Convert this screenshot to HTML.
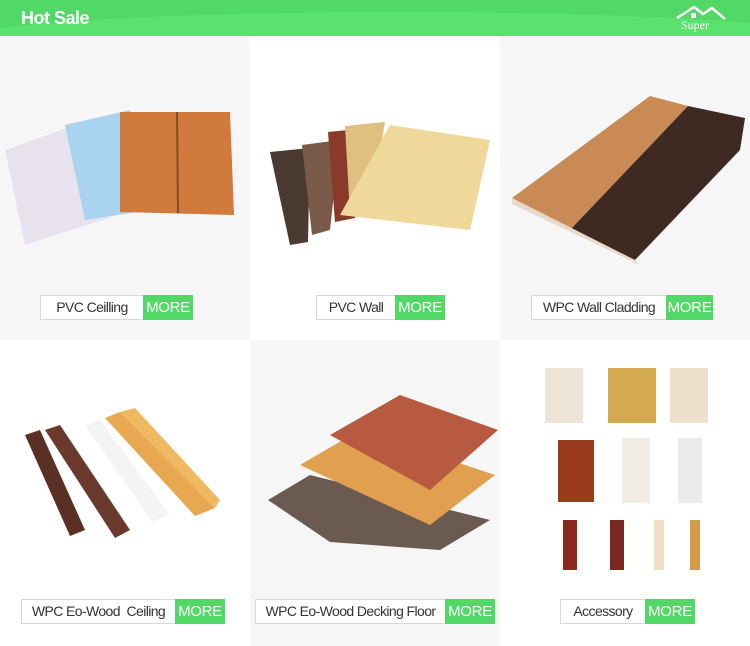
<!DOCTYPE html>
<html><head><style>
*{margin:0;padding:0;box-sizing:border-box}
body{width:750px;height:646px;overflow:hidden;font-family:"Liberation Sans",sans-serif;background:#fff;position:relative}
.hd{position:absolute;left:0;top:0;width:750px;height:36px;background:#52d866;overflow:hidden}
.hd .w{position:absolute;left:-50px;top:12px;width:900px;height:60px;border-radius:50%;background:#5ae26f}
.hd b{position:absolute;left:21px;top:8px;color:#fff;font-size:18px;letter-spacing:-0.5px}
.c{position:absolute;width:250px}
.g{background:#f6f6f6}
.lb{position:absolute;height:25px;border:1px solid #d8d8d8;background:#fff;font-size:14px;color:#333;line-height:23px;text-align:center;letter-spacing:-0.6px}
.g .lb{background:#f6f6f6}
.mo{position:absolute;height:25px;background:#52d866;color:#fff;font-size:15px;line-height:25px;text-align:center;letter-spacing:-0.3px}
svg{position:absolute}
</style></head><body>
<div class="hd"><div class="w"></div><b>Hot Sale</b>
<svg style="left:674px;top:4px" width="60" height="30"><path d="M3 14 L20 3 L29 10 L38 4 L51 15" stroke="#fff" stroke-width="2.5" fill="none"/><rect x="17" y="9" width="5" height="5" fill="#fff"/><text x="7" y="25" fill="#fff" font-size="12" font-family="Liberation Serif">Super</text></svg></div>

<div class="c g" style="left:0;top:36px;height:304px"></div>
<div class="c" style="left:250px;top:36px;height:304px"></div>
<div class="c g" style="left:500px;top:36px;height:304px"></div>
<div class="c" style="left:0;top:340px;height:306px"></div>
<div class="c g" style="left:250px;top:340px;height:306px"></div>
<div class="c" style="left:500px;top:340px;height:306px"></div>

<svg style="left:0;top:100px" width="250" height="150">
<polygon points="5,50 95,18 118,115 25,145" fill="#e8e2ee"/>
<polygon points="65,25 130,10 150,110 85,120" fill="#a9d3ee"/>
<polygon points="120,12 230,12 234,115 120,112" fill="#d07a3e"/>
<line x1="177" y1="12" x2="178" y2="113" stroke="#8a4a20" stroke-width="2"/>
</svg>
<svg style="left:250px;top:100px" width="250" height="150">
<polygon points="20,52 60,48 58,142 40,145" fill="#4a3a32"/>
<polygon points="52,45 90,40 80,130 62,135" fill="#7a5a48"/>
<polygon points="78,32 118,28 105,118 85,122" fill="#8a3a2a"/>
<polygon points="95,26 135,22 120,110 100,114" fill="#e0c080"/>
<polygon points="140,25 240,40 220,130 90,115" fill="#f0d89a"/>
</svg>
<svg style="left:500px;top:80px" width="250" height="190">
<polygon points="12,118 150,16 188,26 70,150" fill="#c98a56"/>
<polygon points="70,150 188,26 245,38 240,70 135,180" fill="#3e2a22"/>
<polygon points="12,118 135,180 140,185 12,124" fill="#e8d8c8"/>
</svg>
<svg style="left:0;top:400px" width="250" height="140">
<polygon points="25,35 40,30 85,130 70,136" fill="#5a3024"/>
<polygon points="45,30 60,25 130,130 115,138" fill="#6a3a2c"/>
<polygon points="85,25 100,20 170,115 152,122" fill="#f4f4f4"/>
<polygon points="105,18 120,12 215,108 195,116" fill="#e8a850"/>
<polygon points="120,12 135,8 220,100 215,108" fill="#f0b860"/>
</svg>
<svg style="left:250px;top:380px" width="250" height="170">
<polygon points="18,120 60,95 240,140 190,170 80,162" fill="#6a5a52"/>
<polygon points="50,85 110,50 245,95 180,145" fill="#e0a050"/>
<polygon points="80,55 150,15 248,50 180,110" fill="#b85a40"/>
</svg>
<svg style="left:530px;top:360px" width="190" height="220">
<rect x="15" y="8" width="38" height="55" fill="#efe4d8"/>
<rect x="78" y="8" width="48" height="55" fill="#d4aa50"/>
<rect x="140" y="8" width="38" height="55" fill="#efe0cc"/>
<rect x="28" y="80" width="36" height="62" fill="#9a3a1c"/>
<rect x="92" y="78" width="28" height="65" fill="#f2ece4"/>
<rect x="148" y="78" width="24" height="65" fill="#ebebeb"/>
<rect x="33" y="160" width="14" height="50" fill="#8a2a1c"/>
<rect x="80" y="160" width="14" height="50" fill="#7a2a20"/>
<rect x="124" y="160" width="10" height="50" fill="#efe0c4"/>
<rect x="160" y="160" width="10" height="50" fill="#d49a48"/>
</svg>

<div class="lb" style="left:40px;top:295px;width:104px">PVC Ceilling</div><div class="mo" style="left:143px;top:295px;width:50px">MORE</div>
<div class="lb" style="left:316px;top:295px;width:80px;background:#fff">PVC Wall</div><div class="mo" style="left:395px;top:295px;width:50px">MORE</div>
<div class="lb" style="left:531px;top:295px;width:136px">WPC Wall Cladding</div><div class="mo" style="left:666px;top:295px;width:47px">MORE</div>
<div class="lb" style="left:21px;top:599px;width:155px;background:#fff">WPC Eo-Wood&nbsp; Ceiling</div><div class="mo" style="left:175px;top:599px;width:50px">MORE</div>
<div class="lb" style="left:255px;top:599px;width:191px">WPC Eo-Wood Decking Floor</div><div class="mo" style="left:445px;top:599px;width:50px">MORE</div>
<div class="lb" style="left:560px;top:599px;width:86px;background:#fff">Accessory</div><div class="mo" style="left:645px;top:599px;width:50px">MORE</div>
</body></html>
